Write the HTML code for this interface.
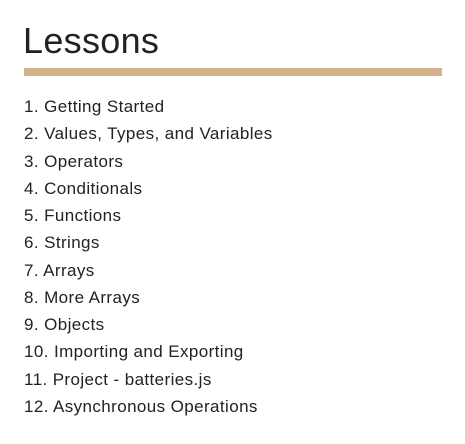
<!DOCTYPE html>
<html><head><style>
html,body{margin:0;padding:0;background:#fff;width:465px;height:444px;overflow:hidden}
body{font-family:"Liberation Sans",sans-serif;color:#222}
h1{position:absolute;left:23px;top:19px;margin:0;font-weight:400;font-size:36px;line-height:44px;letter-spacing:0.3px;color:#222}
.bar{position:absolute;left:24px;top:68px;width:418px;height:8px;background:#d2b48c}
ul{position:absolute;left:24px;top:93px;margin:0;padding:0;list-style:none;font-size:17px;letter-spacing:0.4px;line-height:27.25px;color:#222}
</style></head><body>
<h1>Lessons</h1>
<div class="bar"></div>
<ul>
<li>1. Getting Started</li>
<li>2. Values, Types, and Variables</li>
<li>3. Operators</li>
<li>4. Conditionals</li>
<li>5. Functions</li>
<li>6. Strings</li>
<li>7. Arrays</li>
<li>8. More Arrays</li>
<li>9. Objects</li>
<li>10. Importing and Exporting</li>
<li>11. Project - batteries.js</li>
<li>12. Asynchronous Operations</li>
</ul>
</body></html>
